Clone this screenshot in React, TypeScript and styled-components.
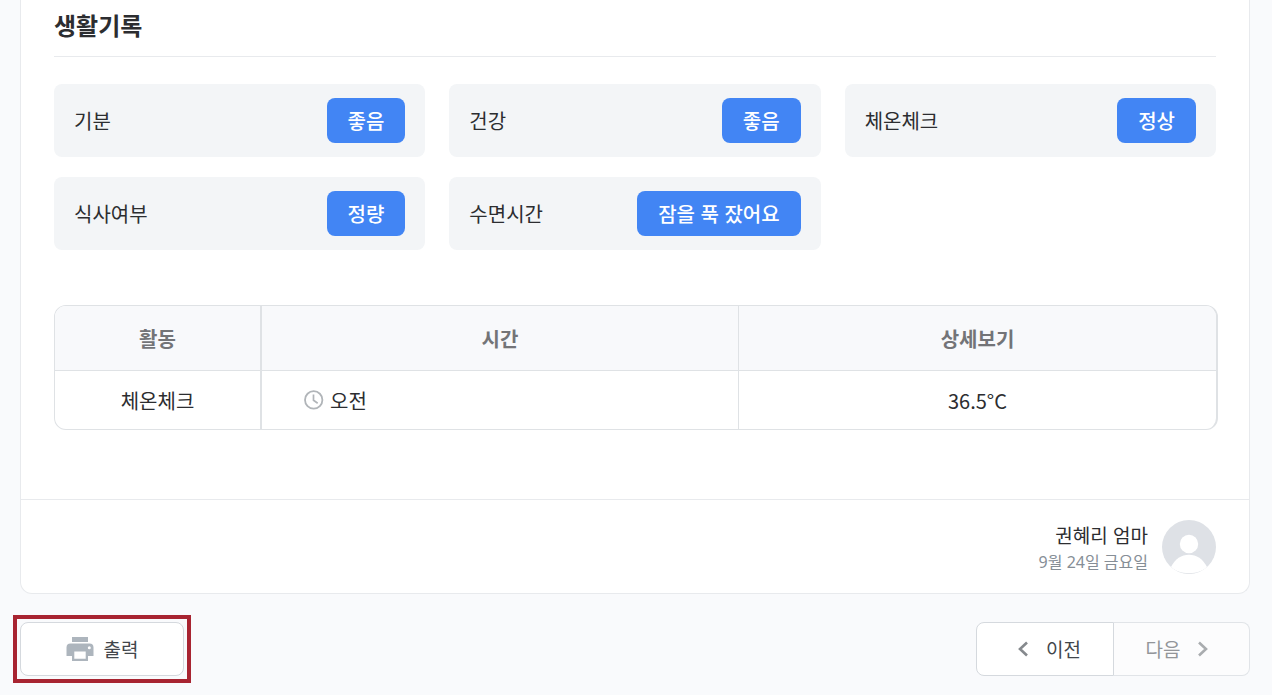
import React from "react";
import styled, { createGlobalStyle } from "styled-components";

const GlobalStyle = createGlobalStyle`
  *, *::before, *::after { box-sizing: border-box; }
  body {
    margin: 0;
    background: #f9fafc;
    color: #2c2d30;
    font-family: "Noto Sans CJK KR", "Noto Sans", sans-serif;
    font-size: 20px;
    line-height: 30px;
  }
  button { font: inherit; cursor: pointer; }
`;

const Page = styled.main`
  padding: 0 22px 12px 20px;
`;

const ReportCard = styled.article`
  background: #fff;
  border: 1px solid #e8eaed;
  border-top: 0;
  border-radius: 0 0 12px 12px;
`;

const Section = styled.section`
  padding: 7px 33px 69px;
`;

const Title = styled.h2`
  margin: 0 0 27px;
  padding-bottom: 13px;
  border-bottom: 1px solid #e8eaed;
  font-size: 24px;
  line-height: 36px;
  font-weight: 700;
`;

const StatusGrid = styled.dl`
  display: grid;
  grid-template-columns: repeat(3, minmax(0, 1fr));
  gap: 20px 24px;
  margin: 0 0 55px;
`;

const StatusItem = styled.div`
  display: flex;
  align-items: center;
  justify-content: space-between;
  padding: 14px 20px;
  border-radius: 8px;
  background: #f3f5f7;
`;

const StatusLabel = styled.dt`
  padding-top: 1px;
  white-space: nowrap;
`;

const StatusValue = styled.dd`
  margin: 0;
  padding: 4px 21px 0;
  border-radius: 8px;
  background: #4285f4;
  color: #fff;
  font-family: "Liberation Sans", "Noto Sans CJK KR", sans-serif;
  font-weight: 500;
  line-height: 41px;
  white-space: nowrap;
`;

const TableFrame = styled.div`
  margin-right: -2px;
  border: 1px solid #dfe2e5;
  border-right-width: 2px;
  border-radius: 12px;
  overflow: hidden;
`;

const Table = styled.table`
  width: 100%;
  table-layout: fixed;
  border-collapse: separate;
  border-spacing: 0;
`;

const HeadCell = styled.th<{ $narrow?: boolean }>`
  width: ${(p) => (p.$narrow ? "207px" : "auto")};
  height: 65px;
  padding: 2px 0 0;
  border-right: ${(p) => (p.$narrow ? 2 : 1)}px solid #dfe2e5;
  border-bottom: 1px solid #dfe2e5;
  background: #f8f9fb;
  color: #737477;
  font-weight: 700;
  &:last-child { border-right: 0; }
`;

const Cell = styled.td<{ $narrow?: boolean; $start?: boolean }>`
  height: 58px;
  padding: 2px ${(p) => (p.$start ? 42 : 0)}px 0;
  border-right: ${(p) => (p.$narrow ? 2 : 1)}px solid #dfe2e5;
  text-align: ${(p) => (p.$start ? "left" : "center")};
  &:last-child { border-right: 0; }
`;

const TimeValue = styled.span`
  display: flex;
  align-items: center;
  gap: 6px;
`;

const AuthorBar = styled.footer`
  display: flex;
  align-items: center;
  justify-content: flex-end;
  gap: 14px;
  padding: 20px 33px 19px;
  border-top: 1px solid #e8eaed;
`;

const AuthorText = styled.div`
  padding-top: 4px;
  text-align: right;
`;

const AuthorName = styled.div`
  font-family: "Liberation Sans", "Noto Sans CJK KR", sans-serif;
  font-size: 19px;
  line-height: 26px;
`;

const AuthorDate = styled.div`
  color: #868e96;
  font-family: "Noto Sans", "Noto Sans CJK KR", sans-serif;
  font-size: 16px;
  line-height: 24px;
`;

const Actions = styled.div`
  display: flex;
  justify-content: space-between;
  margin-top: 28px;
`;

const ActionButton = styled.button`
  display: flex;
  align-items: center;
  justify-content: center;
  height: 54px;
  padding: 0;
  border: 1px solid #d5d9de;
  background: #fff;
  color: #42464b;
  font-size: 19px;
`;

const Highlight = styled.div`
  margin: -7px;
  padding: 3px;
  border: 4px solid #a82431;
`;

const PrintButton = styled(ActionButton)`
  gap: 10px;
  width: 164px;
  border-radius: 8px;
`;

const Pager = styled.nav`
  display: flex;
`;

const PrevButton = styled(ActionButton)`
  gap: 17px;
  width: 138px;
  padding-left: 8px;
  border-radius: 8px 0 0 8px;
`;

const NextButton = styled(ActionButton)`
  gap: 17px;
  width: 136px;
  padding-right: 8px;
  border-color: #e1e4e8;
  border-left: 0;
  border-radius: 0 8px 8px 0;
  background: #fcfcfd;
  color: #939599;
  cursor: default;
`;

const ClockIcon = () => (
  <svg width="20" height="22" viewBox="0 0 20 22" fill="none" stroke="#b1b5b9" strokeWidth="1.800" aria-hidden="true">
    <circle cx="9.700" cy="9.900" r="8.700" />
    <path d="M9.500 4.500v5.800l4.200 3" strokeWidth="1.700" />
  </svg>
);

const PrinterIcon = () => (
  <svg width="28" height="26" viewBox="0 0 28 26" aria-hidden="true">
    <path
      fill="#adb5bd"
      fillRule="evenodd"
      d="M6 1h16v5H6z M4.500 7.500h19a4 4 0 0 1 4 4V20H22v5H6v-5H.5v-8.500a4 4 0 0 1 4-4z M8.300 15.500v7.300h11.400v-7.300z M23.300 10.300a1.500 1.500 0 1 0 0 3 1.500 1.500 0 0 0 0-3z"
    />
  </svg>
);

const Chevron = ({ right = false }: { right?: boolean }) => (
  <svg width="12" height="16" viewBox="0 0 12 16" fill="none" stroke={right ? "#a9acaf" : "#85898d"} strokeWidth="2.600" aria-hidden="true">
    <path d={right ? "M2 1.500L9 8l-7 6.500" : "M10 1.500L3 8l7 6.500"} />
  </svg>
);

const Avatar = () => (
  <svg width="54" height="54" viewBox="0 0 54 54" role="img" aria-label="프로필">
    <defs>
      <clipPath id="avatar-circle"><circle cx="27" cy="27" r="27" /></clipPath>
    </defs>
    <g clipPath="url(#avatar-circle)">
      <rect width="54" height="54" fill="#dee1e6" />
      <circle cx="27" cy="24" r="9.200" fill="#fff" />
      <path d="M9 47C13 39 19.500 34.800 27 34.800s14 4.200 18 12.200c-4 4-10 6.200-18 6.200S13 51 9 47z" fill="#fff" />
    </g>
  </svg>
);

const statuses = [
  ["기분", "좋음"],
  ["건강", "좋음"],
  ["체온체크", "정상"],
  ["식사여부", "정량"],
  ["수면시간", "잠을 푹 잤어요"],
];

export default function App() {
  return (
    <>
      <GlobalStyle />
      <Page>
        <ReportCard>
          <Section>
            <Title>생활기록</Title>
            <StatusGrid>
              {statuses.map(([label, value]) => (
                <StatusItem key={label}>
                  <StatusLabel>{label}</StatusLabel>
                  <StatusValue>{value}</StatusValue>
                </StatusItem>
              ))}
            </StatusGrid>
            <TableFrame>
              <Table>
                <thead>
                  <tr>
                    <HeadCell scope="col" $narrow>활동</HeadCell>
                    <HeadCell scope="col">시간</HeadCell>
                    <HeadCell scope="col">상세보기</HeadCell>
                  </tr>
                </thead>
                <tbody>
                  <tr>
                    <Cell $narrow>체온체크</Cell>
                    <Cell $start>
                      <TimeValue><ClockIcon />오전</TimeValue>
                    </Cell>
                    <Cell>36.5°C</Cell>
                  </tr>
                </tbody>
              </Table>
            </TableFrame>
          </Section>
          <AuthorBar>
            <AuthorText>
              <AuthorName>권혜리 엄마</AuthorName>
              <AuthorDate>9월 24일 금요일</AuthorDate>
            </AuthorText>
            <Avatar />
          </AuthorBar>
        </ReportCard>
        <Actions>
          <Highlight>
            <PrintButton type="button"><PrinterIcon />출력</PrintButton>
          </Highlight>
          <Pager aria-label="기록 이동">
            <PrevButton type="button"><Chevron />이전</PrevButton>
            <NextButton type="button" disabled>다음<Chevron right /></NextButton>
          </Pager>
        </Actions>
      </Page>
    </>
  );
}
